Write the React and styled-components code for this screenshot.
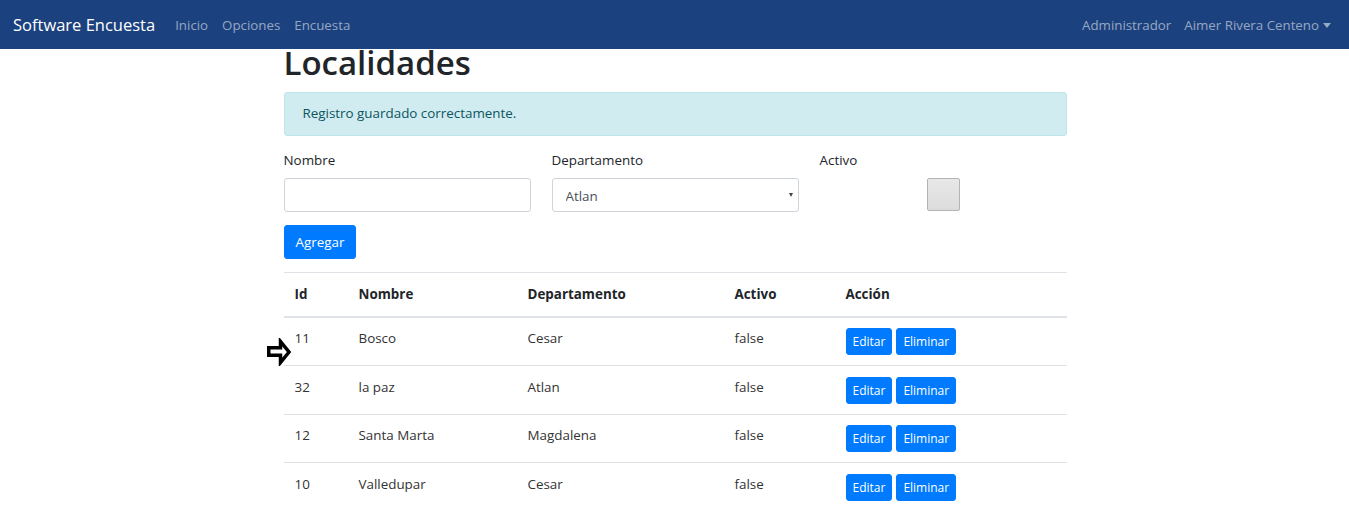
import React from 'react';
import styled, { createGlobalStyle } from 'styled-components';

const rows = [
    { id: 11, nombre: 'Bosco', depto: 'Cesar', activo: 'false', marked: true },
    { id: 32, nombre: 'la paz', depto: 'Atlan', activo: 'false' },
    { id: 12, nombre: 'Santa Marta', depto: 'Magdalena', activo: 'false' },
    { id: 10, nombre: 'Valledupar', depto: 'Cesar', activo: 'false' },
];

const App = () => {
    return (
        <>
            <GlobalStyle />
            <StNavbar>
                <StNavLeft>
                    <StBrand>Software Encuesta</StBrand>
                    <StNavLink>Inicio</StNavLink>
                    <StNavLink>Opciones</StNavLink>
                    <StNavLink>Encuesta</StNavLink>
                </StNavLeft>
                <StNavRight>
                    <StNavLink>Administrador</StNavLink>
                    <StNavLink $dropdown>Aimer Rivera Centeno</StNavLink>
                </StNavRight>
            </StNavbar>
            <StContainer>
                <StTitle>Localidades</StTitle>
                <StAlert>Registro guardado correctamente.</StAlert>
                <StFormRow>
                    <StGroup>
                        <StLabel>Nombre</StLabel>
                        <StInput type="text" />
                    </StGroup>
                    <StGroup>
                        <StLabel>Departamento</StLabel>
                        <StSelectWrap>
                            <StSelect defaultValue="Atlan">
                                <option>Atlan</option>
                                <option>Cesar</option>
                                <option>Magdalena</option>
                            </StSelect>
                        </StSelectWrap>
                    </StGroup>
                    <StGroup>
                        <StLabel>Activo</StLabel>
                        <StCheckRow>
                            <StCheck type="checkbox" />
                        </StCheckRow>
                    </StGroup>
                </StFormRow>
                <StPrimaryButton>Agregar</StPrimaryButton>
                <StTable>
                    <thead>
                        <tr>
                            <StTh>Id</StTh>
                            <StTh>Nombre</StTh>
                            <StTh>Departamento</StTh>
                            <StTh>Activo</StTh>
                            <StTh>Acción</StTh>
                        </tr>
                    </thead>
                    <tbody>
                        {rows.map((r) => (
                            <tr key={r.id}>
                                <StTd>
                                    {r.marked && (
                                        <StPointer width="28" height="28" viewBox="0 0 28 28">
                                            <path
                                                d="M3.75 9.75 H15.5 V3.5 L24 14 L15.5 24.5 V17.25 H3.75 Z"
                                                fill="#fff"
                                                stroke="#000"
                                                strokeWidth="3.5"
                                                strokeLinejoin="miter"
                                            />
                                        </StPointer>
                                    )}
                                    {r.id}
                                </StTd>
                                <StTd>{r.nombre}</StTd>
                                <StTd>{r.depto}</StTd>
                                <StTd>{r.activo}</StTd>
                                <StTd>
                                    <StSmallButton>Editar</StSmallButton>
                                    <StSmallButton>Eliminar</StSmallButton>
                                </StTd>
                            </tr>
                        ))}
                    </tbody>
                </StTable>
            </StContainer>
        </>
    );
};

export default App;

const GlobalStyle = createGlobalStyle`
    body {
        margin: 0;
        background: #fff;
        font-family: "Open Sans", "Noto Sans", sans-serif;
        font-size: 13.4px;
        line-height: 1.5;
        color: #212529;
    }
    * {
        box-sizing: border-box;
    }
`;

const StNavbar = styled.nav`
    height: 49px;
    background-color: #1b417e;
    display: flex;
    align-items: center;
    justify-content: space-between;
    padding: 2px 13px 0;
`;

const StNavLeft = styled.div`
    display: flex;
    align-items: center;
`;

const StNavRight = styled.div`
    display: flex;
    align-items: center;
    gap: 13px;
    padding-right: 5px;
`;

const StBrand = styled.span`
    color: #fff;
    font-size: 16.5px;
    margin-right: 20px;
`;

const StNavLink = styled.span`
    color: rgba(255, 255, 255, 0.55);
    font-size: 13.3px;
    margin-right: 14px;
    display: inline-flex;
    align-items: center;

    ${StNavRight} & {
        margin-right: 0;
    }

    ${({ $dropdown }) =>
        $dropdown &&
        `
        &::after {
            content: '';
            margin-left: 4px;
            border-top: 5px solid rgba(255, 255, 255, 0.55);
            border-left: 4px solid transparent;
            border-right: 4px solid transparent;
        }
    `}
`;

const StContainer = styled.main`
    width: 784px;
    margin: 0 auto;
    padding-left: 1px;
`;

const StTitle = styled.h1`
    font-size: 33px;
    font-weight: 600;
    line-height: 1.2;
    margin: -6px 0 9px;
    color: #212529;
`;

const StAlert = styled.div`
    background-color: #d1ecf1;
    border: 1px solid #bee5eb;
    color: #0c5460;
    border-radius: 3px;
    padding: 10.5px 18px;
    line-height: 21px;
    margin-bottom: 14px;
`;

const StFormRow = styled.div`
    display: grid;
    grid-template-columns: repeat(3, 1fr);
    column-gap: 21px;
`;

const StGroup = styled.div`
    display: flex;
    flex-direction: column;
    margin-bottom: 13px;
`;

const StLabel = styled.label`
    line-height: 21px;
    margin-bottom: 7px;
`;

const StInput = styled.input`
    height: 34px;
    border: 1px solid #ced4da;
    border-radius: 3px;
    padding: 0 12px;
    font: inherit;
`;

const StSelectWrap = styled.div`
    position: relative;

    &::after {
        content: '';
        position: absolute;
        right: 6px;
        top: 15px;
        border-top: 4px solid #444;
        border-left: 2.5px solid transparent;
        border-right: 2.5px solid transparent;
        pointer-events: none;
    }
`;

const StSelect = styled.select`
    appearance: none;
    width: 100%;
    height: 34px;
    border: 1px solid #ced4da;
    border-radius: 3px;
    padding: 2px 13px 0;
    background: #fff;
    font: inherit;
    color: #495057;
`;

const StCheckRow = styled.div`
    display: flex;
    justify-content: center;
    height: 34px;
`;

const StCheck = styled.input`
    appearance: none;
    margin: 0;
    width: 33px;
    height: 33px;
    border: 1px solid #b4b4b4;
    border-radius: 2px;
    background: linear-gradient(#e8e8e8, #dcdcdc);
`;

const StPrimaryButton = styled.button`
    display: block;
    height: 34px;
    padding: 0 11px;
    background-color: #007bff;
    border: 1px solid #007bff;
    border-radius: 3px;
    color: #fff;
    font: inherit;
    cursor: pointer;
    margin-bottom: 13px;
`;

const StTable = styled.table`
    width: 100%;
    border-collapse: collapse;

    th:nth-child(1) { width: 64px; }
    th:nth-child(2) { width: 169px; }
    th:nth-child(3) { width: 207px; }
    th:nth-child(4) { width: 111px; }
`;

const StTh = styled.th`
    text-align: left;
    font-weight: 700;
    padding: 11px;
    line-height: 21px;
    border-top: 1px solid #dee2e6;
    border-bottom: 2px solid #dee2e6;
`;

const StTd = styled.td`
    position: relative;
    vertical-align: top;
    padding: 10.5px 11px 10px;
    line-height: 21px;
    border-top: 1px solid #dee2e6;
    color: #333;
`;

const StPointer = styled.svg`
    position: absolute;
    left: -19px;
    top: 20px;
`;

const StSmallButton = styled.button`
    height: 27px;
    padding: 0 6px;
    margin: 0 4px 0 0;
    background-color: #007bff;
    border: 1px solid #007bff;
    border-radius: 3px;
    color: #fff;
    font-family: inherit;
    font-size: 12px;
    cursor: pointer;
`;
